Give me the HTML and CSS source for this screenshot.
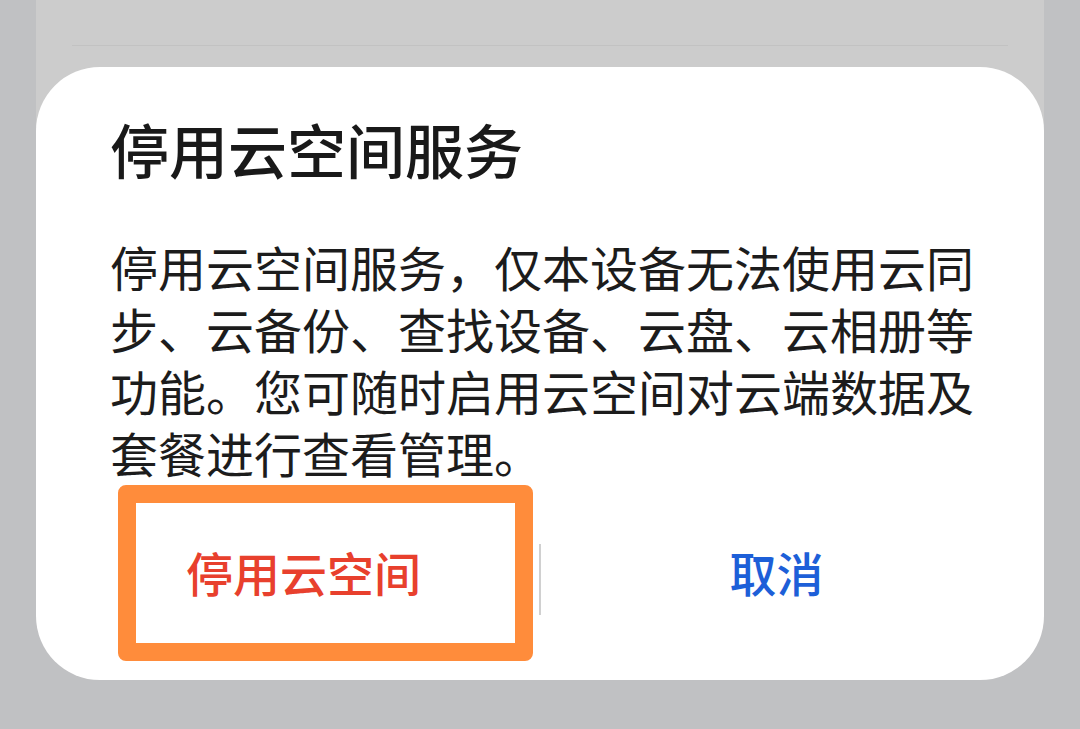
FILE: index.html
```html
<!DOCTYPE html>
<html lang="zh-CN">
<head>
<meta charset="utf-8">
<title>停用云空间服务</title>
<link rel="stylesheet" href="styles.css">
</head>
<body>
<div class="screen">
  <div class="page-card">
    <div class="page-line"></div>
  </div>
  <div class="dialog">
    <h1 class="dialog-title">停用云空间服务</h1>
    <p class="dialog-body">停用云空间服务，仅本设备无法使用云同步、云备份、查找设备、云盘、云相册等功能。您可随时启用云空间对云端数据及套餐进行查看管理。</p>
    <div class="dialog-actions">
      <button class="action action-danger">停用云空间</button>
      <span class="action-divider"></span>
      <button class="action action-primary">取消</button>
    </div>
    <div class="highlight"></div>
  </div>
</div>
</body>
</html>
```

FILE: styles.css
```css
html, body {
  margin: 0;
  padding: 0;
}
body {
  width: 1080px;
  height: 729px;
  background: #c0c1c3;
  overflow: hidden;
  font-family: "Noto Sans CJK SC", "Noto Sans", sans-serif;
}
.screen {
  position: relative;
  width: 1080px;
  height: 729px;
  padding: 0 36px;
  box-sizing: border-box;
}
.page-card {
  background: #cccccc;
  height: 300px;
  padding-top: 45px;
  box-sizing: border-box;
}
.page-line {
  margin: 0 36px;
  height: 1px;
  background: #c2c2c2;
}
.dialog {
  position: absolute;
  top: 67px;
  left: 36px;
  width: 1008px;
  background: #ffffff;
  border-radius: 64px;
  padding: 46px 0 65px;
  box-sizing: border-box;
}
.dialog-title {
  margin: 0 0 0 74px;
  font-size: 59px;
  line-height: 72px;
  font-weight: 500;
  color: #191919;
}
.dialog-body {
  margin: 50px 0 0 74px;
  width: 880px;
  font-size: 48px;
  line-height: 62px;
  color: #1c1c1c;
}
.dialog-actions {
  margin: 60px 32px 0;
  height: 72px;
  display: flex;
  align-items: center;
}
.action {
  flex: 1;
  height: 72px;
  border: none;
  background: transparent;
  padding: 0 0 14px;
  font-family: inherit;
  font-size: 47px;
  font-weight: 500;
  line-height: 58px;
}
.action-danger {
  color: #e8402d;
}
.action-primary {
  color: #1d5fd8;
}
.action-divider {
  width: 2px;
  height: 71px;
  background: #d0d0d0;
}
.highlight {
  position: absolute;
  left: 82px;
  top: 418px;
  width: 415px;
  height: 176px;
  border: 18px solid #ff8c3b;
  border-radius: 8px;
  box-sizing: border-box;
}
```
